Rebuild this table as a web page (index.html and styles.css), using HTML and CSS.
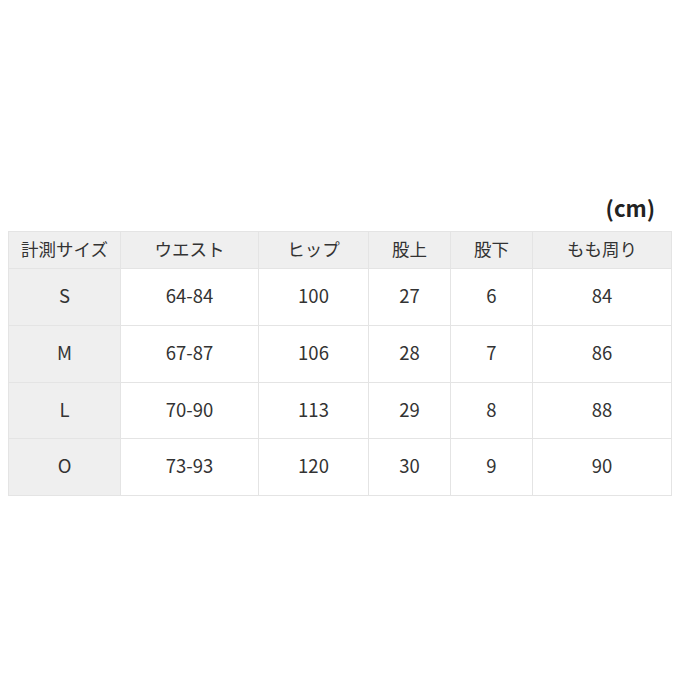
FILE: index.html
```html
<!DOCTYPE html>
<html lang="ja">
<head>
<meta charset="utf-8">
<link rel="stylesheet" href="styles.css">
</head>
<body>
<div class="wrap">
  <div class="unit">(cm)</div>
  <table class="size">
    <colgroup>
      <col class="c1"><col class="c2"><col class="c3"><col class="c4"><col class="c5"><col class="c6">
    </colgroup>
    <thead>
      <tr><th>計測サイズ</th><th>ウエスト</th><th>ヒップ</th><th>股上</th><th>股下</th><th>もも周り</th></tr>
    </thead>
    <tbody>
      <tr><th>S</th><td>64-84</td><td>100</td><td>27</td><td>6</td><td>84</td></tr>
      <tr><th>M</th><td>67-87</td><td>106</td><td>28</td><td>7</td><td>86</td></tr>
      <tr class="short"><th>L</th><td>70-90</td><td>113</td><td>29</td><td>8</td><td>88</td></tr>
      <tr><th>O</th><td>73-93</td><td>120</td><td>30</td><td>9</td><td>90</td></tr>
    </tbody>
  </table>
</div>
</body>
</html>
```
FILE: styles.css
```css
html, body {
  margin: 0;
  padding: 0;
  background: #ffffff;
}
.wrap {
  padding: 192px 9px 0 8px;
  font-family: "Noto Sans CJK JP", "Noto Sans", sans-serif;
  color: #333333;
}
.unit {
  text-align: right;
  font-weight: 700;
  font-size: 22px;
  line-height: 30px;
  padding-right: 16px;
  margin-bottom: 9px;
  color: #222222;
}
.size {
  border-collapse: collapse;
  table-layout: fixed;
  width: 663px;
  font-size: 18.5px;
}
.c1 { width: 112px; }
.c2 { width: 138px; }
.c3 { width: 110px; }
.c4 { width: 82px; }
.c5 { width: 82px; }
.c6 { width: 139px; }
.size th, .size td {
  border: 1px solid #e4e4e4;
  text-align: center;
  font-weight: 400;
  padding: 0 0 4px 0;
}
.size thead th {
  background: #efefef;
  height: 32px;
  font-size: 17.5px;
}
.size tbody th {
  background: #efefef;
}
.size tbody tr { height: 57px; }
.size tbody tr.short { height: 56px; }
.size td { background: #ffffff; }
```
